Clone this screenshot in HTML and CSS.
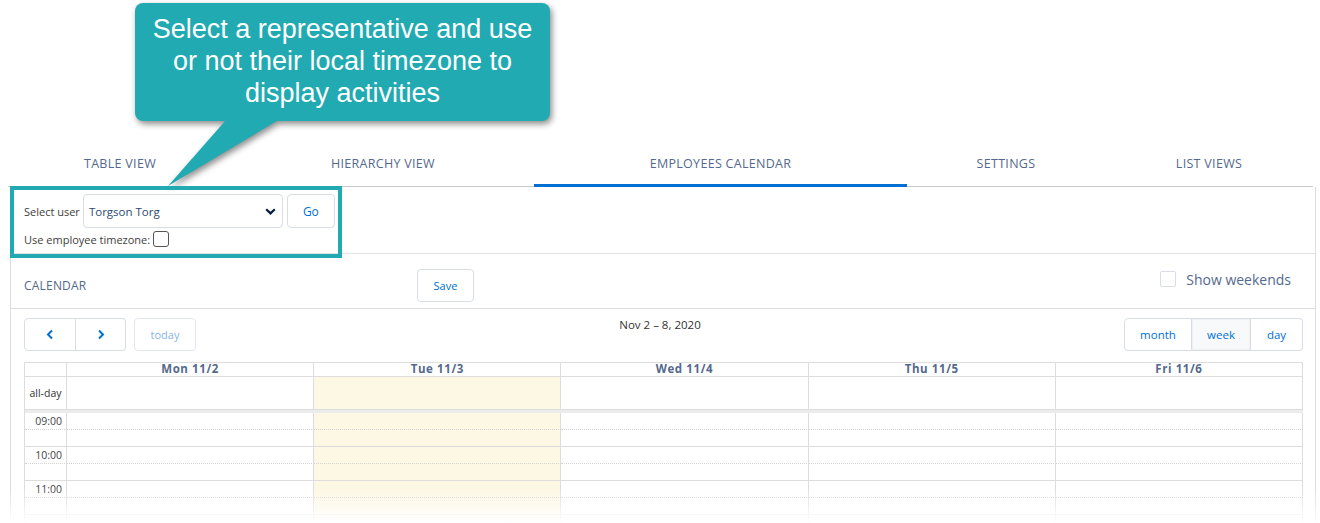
FILE: index.html
```html
<!DOCTYPE html>
<html>
<head>
<meta charset="utf-8">
<title>Employees Calendar</title>
<link rel="stylesheet" href="styles.css">
</head>
<body>
<div class="page">
  <nav class="tabs">
    <div class="tab">Table View</div>
    <div class="tab">Hierarchy View</div>
    <div class="tab active">Employees Calendar</div>
    <div class="tab">Settings</div>
    <div class="tab">List Views</div>
  </nav>

  <div class="panel">
    <div class="user-bar">
      <div class="user-row">
        <span class="lbl">Select user</span>
        <div class="select">
          <span>Torgson Torg</span>
          <svg class="chev" width="11" height="7" viewBox="0 0 11 7"><polyline points="1.2,1.2 5.5,5.4 9.8,1.2" fill="none" stroke="#061c3f" stroke-width="2.2"/></svg>
        </div>
        <div class="btn go">Go</div>
      </div>
      <div class="tz-row">
        <span class="lbl">Use employee timezone:</span>
        <span class="cb-dark"></span>
      </div>
    </div>

    <div class="cal-head">
      <div class="cal-title">Calendar</div>
      <div class="btn save">Save</div>
      <label class="weekends"><span class="cb-light"></span><span>Show weekends</span></label>
    </div>

    <div class="toolbar">
      <div class="tb-left">
        <div class="btn nav prev"><svg width="8" height="11" viewBox="0 0 8 11"><polyline points="6,1.5 2,5.5 6,9.5" fill="none" stroke="#0070d2" stroke-width="2"/></svg></div>
        <div class="btn nav next"><svg width="8" height="11" viewBox="0 0 8 11"><polyline points="2,1.5 6,5.5 2,9.5" fill="none" stroke="#0070d2" stroke-width="2"/></svg></div>
        <div class="btn today">today</div>
      </div>
      <div class="tb-title">Nov 2 – 8, 2020</div>
      <div class="tb-right">
        <div class="btn view month">month</div>
        <div class="btn view week active">week</div>
        <div class="btn view day">day</div>
      </div>
    </div>

    <div class="cal-grid">
      <div class="hd axis"></div>
      <div class="hd">Mon 11/2</div>
      <div class="hd">Tue 11/3</div>
      <div class="hd">Wed 11/4</div>
      <div class="hd">Thu 11/5</div>
      <div class="hd">Fri 11/6</div>

      <div class="allday axis">all-day</div>
      <div class="allday"></div>
      <div class="allday today-col"></div>
      <div class="allday"></div>
      <div class="allday"></div>
      <div class="allday"></div>

      <div class="divider"></div>

      <div class="slot half axis">09:00</div><div class="slot half"></div><div class="slot half today-col"></div><div class="slot half"></div><div class="slot half"></div><div class="slot half"></div>
      <div class="slot axis"></div><div class="slot"></div><div class="slot today-col"></div><div class="slot"></div><div class="slot"></div><div class="slot"></div>
      <div class="slot half axis">10:00</div><div class="slot half"></div><div class="slot half today-col"></div><div class="slot half"></div><div class="slot half"></div><div class="slot half"></div>
      <div class="slot axis"></div><div class="slot"></div><div class="slot today-col"></div><div class="slot"></div><div class="slot"></div><div class="slot"></div>
      <div class="slot half axis">11:00</div><div class="slot half"></div><div class="slot half today-col"></div><div class="slot half"></div><div class="slot half"></div><div class="slot half"></div>
      <div class="slot axis"></div><div class="slot"></div><div class="slot today-col"></div><div class="slot"></div><div class="slot"></div><div class="slot"></div>
      <div class="slot half axis"></div><div class="slot half"></div><div class="slot half today-col"></div><div class="slot half"></div><div class="slot half"></div><div class="slot half"></div>
    </div>
  </div>

  <svg class="callout-shape" width="440" height="200" viewBox="0 0 440 200">
    <rect x="5" y="3" width="415" height="118" rx="8" ry="8" fill="#22aab2"/>
    <polygon points="103,112 162,112 38,186" fill="#22aab2"/>
  </svg>
  <div class="callout-text">Select a representative and use or not their local timezone to display activities</div>
  <div class="highlight"></div>
  <div class="fade"></div>
</div>
</body>
</html>
```

FILE: styles.css
```css
* { box-sizing: border-box; }
html, body {
  margin: 0;
  height: 523px;
  overflow: hidden;
  background: #fff;
}
body {
  font-family: "Open Sans", "Noto Sans", sans-serif;
  color: #16325c;
}
.page {
  position: relative;
  height: 523px;
  padding-top: 140px;
}

/* Tabs */
.tabs {
  display: grid;
  grid-template-columns: 224px 302px 373px 198px 208px;
  margin-left: 8px;
  width: 1305px;
  height: 47px;
  border-bottom: 1px solid #c9c9c9;
}
.tab {
  display: flex;
  align-items: center;
  justify-content: center;
  font-size: 12.5px;
  text-transform: uppercase;
  color: #54698d;
  letter-spacing: 0.3px;
  padding-bottom: 0;
}
.tab.active {
  margin-bottom: -1px;
  border-bottom: 3px solid #0070d2;
  padding-top: 3px;
}

/* Panel */
.panel {
  margin-left: 10px;
  width: 1306px;
  border-left: 1px solid #dddddd;
  border-right: 1px solid #dddddd;
  height: 336px;
}
.user-bar {
  height: 67px;
  padding: 7px 13px 0;
  border-bottom: 1px solid #e3e3e3;
}
.user-row {
  display: flex;
  align-items: center;
  height: 34px;
}
.lbl {
  font-size: 11px;
  color: #3e3e3c;
}
.select {
  margin-left: 3px;
  width: 200px;
  height: 34px;
  border: 1px solid #d8dde6;
  border-radius: 4px;
  display: flex;
  align-items: center;
  justify-content: space-between;
  padding: 0 6px 0 5px;
  font-size: 11.5px;
  color: #2b4a72;
}
.btn {
  border: 1px solid #d8dde6;
  border-radius: 4px;
  background: #fff;
  color: #0070d2;
  font-size: 11px;
  display: flex;
  align-items: center;
  justify-content: center;
  height: 33px;
}
.go {
  margin-left: 4px;
  width: 48px;
  height: 34px;
  font-size: 12px;
}
.tz-row {
  display: flex;
  align-items: center;
  margin-top: 2px;
  height: 18px;
}
.cb-dark {
  width: 16px;
  height: 16px;
  border: 1px solid #555;
  border-radius: 3px;
  margin-left: 3px;
}

/* Calendar header */
.cal-head {
  height: 55px;
  display: flex;
  align-items: center;
  padding: 8px 24px 0 13px;
  border-bottom: 1px solid #dddddd;
}
.cal-title {
  width: 393px;
  font-size: 12px;
  text-transform: uppercase;
  color: #54698d;
  letter-spacing: 0.2px;
}
.save {
  width: 57px;
}
.weekends {
  margin-left: auto;
  margin-top: -12px;
  display: flex;
  align-items: center;
  gap: 10px;
  font-size: 14px;
  color: #54698d;
}
.cb-light {
  width: 16px;
  height: 16px;
  border: 1px solid #d8dde6;
  border-radius: 2px;
}

/* Toolbar */
.toolbar {
  display: flex;
  align-items: flex-start;
  padding: 9px 12px 0 13px;
  height: 53px;
}
.tb-left, .tb-right {
  display: flex;
}
.nav {
  width: 52px;
  border-radius: 4px 0 0 4px;
}
.nav.next {
  width: 50px;
  border-left: none;
  border-radius: 0 4px 4px 0;
}
.today {
  margin-left: 8px;
  width: 62px;
  color: #86b5e6;
  border-color: #e3e7ee;
}
.tb-title {
  flex: 1;
  text-align: center;
  font-size: 11.5px;
  color: #333;
  margin-top: -1px;
}
.view {
  font-size: 11.5px;
}
.month { width: 68px; border-radius: 4px 0 0 4px; }
.week { width: 59px; border-radius: 0; border-left: none; background: #f8f9fb; box-shadow: inset 0 0 2px rgba(0,0,0,0.12); }
.day { width: 52px; border-radius: 0 4px 4px 0; border-left: none; }

/* Grid */
.cal-grid {
  margin: 0 12px 0 13px;
  display: grid;
  grid-template-columns: 42px repeat(5, 1fr);
  border-top: 1px solid #dddddd;
  border-left: 1px solid #dddddd;
}
.cal-grid > div {
  border-right: 1px solid #dddddd;
  border-bottom: 1px solid #dddddd;
}
.hd {
  height: 14px;
  font-size: 11.5px;
  font-weight: 700;
  color: #54698d;
  text-align: center;
  line-height: 12px;
  letter-spacing: 0.6px;
}
.allday {
  height: 33px;
}
.allday.axis {
  font-size: 10.5px;
  color: #333;
  display: flex;
  align-items: center;
  justify-content: center;
}
.cal-grid > .divider {
  grid-column: 1 / -1;
  height: 3px;
  background: #ececec;
  border: none;
}
.slot {
  height: 17px;
}
.cal-grid > .half {
  border-bottom: 1px dotted #d4d4d4;
}
.slot.axis {
  font-size: 10.5px;
  color: #444;
  text-align: right;
  padding-right: 4px;
  line-height: 16px;
}
.today-col {
  background: #fcf8e3;
}

/* Annotation overlays */
.callout-shape {
  position: absolute;
  left: 130px;
  top: 0;
  filter: drop-shadow(2px 3px 3px rgba(0, 0, 0, 0.45));
}
.callout-text {
  position: absolute;
  left: 135px;
  top: 3px;
  width: 415px;
  padding: 10px 10px 0;
  text-align: center;
  font-family: "Liberation Sans", Arial, sans-serif;
  font-size: 27px;
  line-height: 32px;
  color: #fff;
}
.highlight {
  position: absolute;
  left: 10px;
  top: 186px;
  width: 332px;
  height: 72px;
  border: 4px solid #22aab2;
}
.fade {
  position: absolute;
  left: 0;
  right: 0;
  bottom: 0;
  height: 34px;
  background: linear-gradient(to bottom, rgba(255,255,255,0), #fff);
}
```
